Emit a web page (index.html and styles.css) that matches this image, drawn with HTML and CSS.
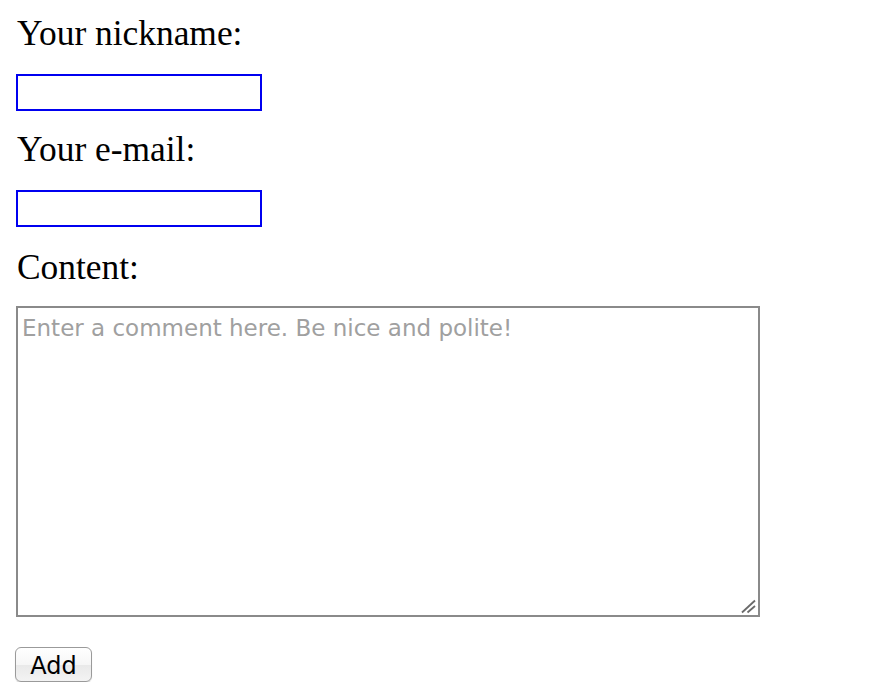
FILE: index.html
```html
<!DOCTYPE html>
<html>
<head>
<meta charset="utf-8">
<link rel="stylesheet" href="styles.css">
</head>
<body>
<form class="form">
  <div class="label label-first">Your nickname:</div>
  <input class="field" type="text">
  <div class="label label-next">Your e-mail:</div>
  <input class="field" type="text">
  <div class="label label-content">Content:</div>
  <div class="comment-wrap">
    <textarea class="comment" placeholder="Enter a comment here. Be nice and polite!"></textarea>
    <svg class="grip" width="22" height="20" viewBox="0 0 22 20">
      <line x1="4" y1="16.5" x2="17" y2="4.5" stroke="#6a6a6a" stroke-width="1.8"/>
      <line x1="9.5" y1="16.5" x2="17" y2="10" stroke="#6a6a6a" stroke-width="1.8"/>
    </svg>
  </div>
  <div class="actions"><button class="btn" type="button">Add</button></div>
</form>
</body>
</html>
```
FILE: styles.css
```css
html, body {
  margin: 0;
  padding: 0;
  background: #fff;
}
body {
  font-family: "Liberation Serif", "Times New Roman", serif;
  color: #000;
}
.form {
  display: flex;
  flex-direction: column;
  align-items: flex-start;
  padding: 13px 16px 0 16px;
}
.label {
  font-size: 35.4px;
  line-height: 40px;
  height: 40px;
  margin-left: 1px;
}
.field {
  box-sizing: border-box;
  width: 246px;
  height: 37px;
  margin: 21px 0 0 0;
  border: 2px solid #0000f0;
  padding: 0;
  outline: none;
  background: #fff;
}
.label-next {
  margin-top: 18px;
}
.label-content {
  margin-top: 20px;
}
.comment-wrap {
  position: relative;
  margin-top: 19px;
  width: 744px;
  height: 311px;
}
.comment {
  display: block;
  box-sizing: border-box;
  width: 744px;
  height: 311px;
  margin: 0;
  border: 2px solid #8a8a8a;
  padding: 6px 4px;
  font-family: "DejaVu Sans", Verdana, sans-serif;
  font-size: 23px;
  line-height: 28px;
  outline: none;
  resize: none;
}
.comment::placeholder {
  color: #a0a0a0;
}
.grip {
  position: absolute;
  right: 0;
  bottom: 1px;
}
.actions {
  margin-top: 30px;
  margin-left: -1px;
}
.btn {
  box-sizing: border-box;
  width: 77px;
  height: 35px;
  padding: 3px 0 0 0;
  border: 1px solid #9a9a9a;
  border-radius: 6px;
  background: linear-gradient(#ffffff, #f6f6f6 50%, #e9e9e9 52%, #f3f3f3);
  font-family: "DejaVu Sans", Verdana, sans-serif;
  font-size: 24px;
  line-height: 30px;
  color: #000;
  box-shadow: 0 1px 1px rgba(0,0,0,0.15);
}
```
